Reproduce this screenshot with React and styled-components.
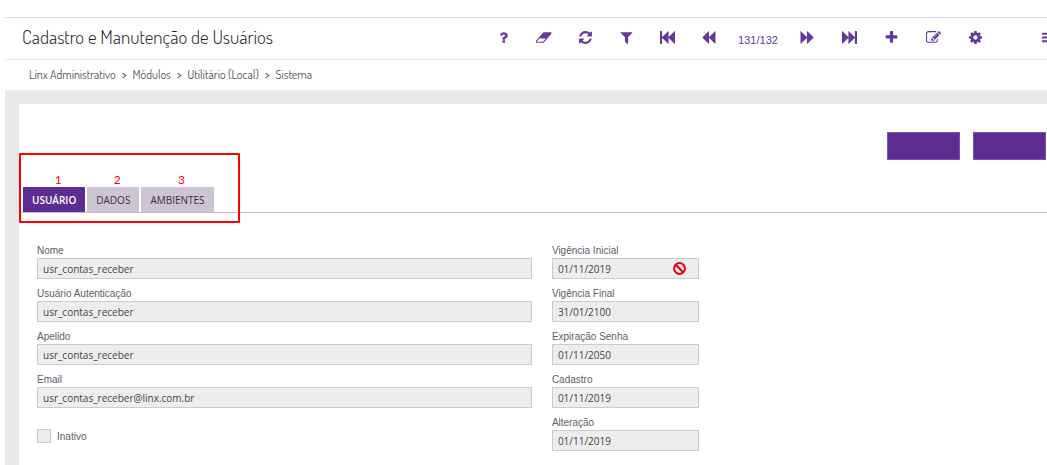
import React, { useState } from "react";
import styled, { createGlobalStyle } from "styled-components";

const GlobalStyle = createGlobalStyle`
  * {
    box-sizing: border-box;
  }
  body {
    margin: 0;
    background: #fff;
    overflow-x: hidden;
    font-family: "Liberation Sans", Arial, sans-serif;
  }
`;

const Page = styled.div`
  display: flex;
  flex-direction: column;
  min-height: 100vh;
  padding: 17px 0 0 5px;
`;

const Header = styled.header`
  display: flex;
  align-items: center;
  justify-content: space-between;
  height: 43px;
  padding-left: 17px;
  border-top: 1px solid #dedede;
  border-bottom: 1px solid #eaeaea;
  overflow: hidden;
`;

const Title = styled.h1`
  margin: 0;
  padding-bottom: 4px;
  color: #222;
  font-family: Dosis, Roboto, sans-serif;
  font-size: 19px;
  font-weight: 300;
  white-space: nowrap;
`;

const Toolbar = styled.nav`
  display: flex;
  align-items: center;
  flex-shrink: 0;
  margin-right: -22px;
`;

const ToolGroup = styled.div`
  display: flex;
  gap: ${(props) => props.$gap || 0}px;
`;

const ToolButton = styled.button`
  display: flex;
  align-items: center;
  justify-content: center;
  width: 41px;
  height: 40px;
  padding: 0 0 2px;
  border: 0;
  background: none;
  color: #65399b;
  cursor: pointer;
`;

const MenuButton = styled(ToolButton)`
  margin-left: 32px;
`;

const Glyph = styled.svg`
  height: 15px;
  fill: currentColor;
`;

const Counter = styled.span`
  width: 58px;
  padding-top: 2px;
  color: #65399b;
  font-size: 11px;
  text-align: center;
`;

const Breadcrumb = styled.nav`
  display: flex;
  align-items: center;
  gap: 6px;
  height: 30px;
  padding: 0 0 2px 24px;
  font-family: Dosis, Roboto, sans-serif;
  font-size: 12px;
  color: #333;
`;

const Crumb = styled.a`
  color: #555;
  text-decoration: none;
`;

const Main = styled.main`
  display: flex;
  flex: 1;
  padding: 14px 0 0 14px;
  background: #e9e9e9;
`;

const Sheet = styled.section`
  flex: 1;
  padding-top: 28px;
  background: #fff;
`;

const Actions = styled.div`
  display: flex;
  justify-content: flex-end;
  gap: 13px;
  padding-right: 1px;
`;

const ActionButton = styled.button`
  width: 73px;
  height: 28px;
  border: 1px solid #7a52a8;
  background: #5c2d91;
  cursor: pointer;
`;

const TabArea = styled.div`
  position: relative;
  padding: 27px 0 0 4px;
  border-bottom: 1px solid #cbbbe0;
`;

const TabList = styled.div`
  display: flex;
  gap: 2px;
`;

const Tab = styled.button`
  position: relative;
  height: 25px;
  padding: 0 9px;
  border: 0;
  background: ${(props) => (props.$active ? "#5c2d91" : "#cdc5d3")};
  color: ${(props) => (props.$active ? "#fff" : "#333")};
  font-family: "Open Sans", sans-serif;
  font-size: 10px;
  font-weight: ${(props) => (props.$active ? 600 : 400)};
  cursor: pointer;
`;

// Number that sits above each tab
const Step = styled.span`
  position: absolute;
  right: 0;
  bottom: 100%;
  left: 8px;
  color: #f00;
  font-family: Lato, sans-serif;
  font-size: 12px;
  font-weight: 400;
  line-height: 15px;
  text-align: center;
`;

const Highlight = styled.div`
  position: absolute;
  top: -7px;
  bottom: -11px;
  left: 0;
  width: 221px;
  border: 2px solid #f00;
  border-radius: 1px;
  pointer-events: none;
`;

const Form = styled.form`
  display: grid;
  grid-template-columns: 49% 147px;
  gap: 20px;
  padding: 29px 0 12px 18px;
`;

const Column = styled.div`
  display: flex;
  flex-direction: column;
  gap: 6px;
`;

const Label = styled.label`
  display: block;
  padding-top: 2px;
  color: #5b6068;
  font-size: 10px;
  line-height: 14px;
`;

const InputWrap = styled.div`
  position: relative;
  display: flex;
`;

const Input = styled.input`
  width: 100%;
  height: 21px;
  padding: 0 5px;
  border: 1px solid #ccc;
  border-radius: 0;
  background: #ededed;
  color: #444;
  font-family: "Open Sans", sans-serif;
  font-size: 10px;
`;

const BanIcon = styled.svg`
  position: absolute;
  top: 4px;
  right: 13px;
  width: 13px;
  height: 13px;
  fill: none;
  stroke: #e60012;
  stroke-width: 2;
`;

const CheckRow = styled.div`
  display: flex;
  align-items: center;
  gap: 6px;
  padding-top: 14px;
`;

const Checkbox = styled.input`
  appearance: none;
  width: 14px;
  height: 14px;
  margin: 0;
  border: 1px solid #ccc;
  background: #ededed;
`;

const icons = {
  help: "M1088 1256v240q0 16-12 28t-28 12h-240q-16 0-28-12t-12-28v-240q0-16 12-28t28-12h240q16 0 28 12t12 28zm316-600q0 54-15.5 101t-35 76.5-55 59.5-57.5 43.5-61 35.5q-41 23-68.5 65t-27.5 67q0 17-12 32.5t-28 15.5h-240q-15 0-25.5-18.5t-10.5-37.5v-45q0-83 65-156.5t143-108.5q59-27 84-56t25-76q0-42-46.5-74t-107.5-32q-65 0-108 29-35 25-107 115-13 16-31 16-12 0-25-8l-164-125q-13-10-15.5-25t5.5-28q160-266 464-266 80 0 161 31t146 83 106 127.5 41 158.5z",
  eraser: "M832 1408l336-384h-768l-336 384h768zm1013-1077q15 34 9.5 71.5t-30.5 65.5l-896 1024q-38 44-96 44h-768q-38 0-69.5-20.5t-47.5-54.5q-15-34-9.5-71.5t30.5-65.5l896-1024q38-44 96-44h768q38 0 69.5 20.5t47.5 54.5z",
  refresh: "M1639 1056q0 5-1 7-64 268-268 434.5t-478 166.5q-146 0-282.5-55t-243.5-157l-129 129q-19 19-45 19t-45-19-19-45v-448q0-26 19-45t45-19h448q26 0 45 19t19 45-19 45l-137 137q71 66 161 102t187 36q134 0 250-65t186-179q11-17 53-117 8-23 30-23h192q13 0 22.5 9.5t9.5 22.5zm25-800v448q0 26-19 45t-45 19h-448q-26 0-45-19t-19-45 19-45l138-138q-148-137-349-137-134 0-250 65t-186 179q-11 17-53 117-8 23-30 23h-199q-13 0-22.5-9.5t-9.5-22.5v-7q65-268 270-434.5t480-166.5q146 0 284 55.5t245 156.5l130-129q19-19 45-19t45 19 19 45z",
  filter: "M1595 295q17 41-14 70l-493 493v742q0 42-39 59-13 5-25 5-27 0-45-19l-256-256q-19-19-19-45v-486l-493-493q-31-29-14-70 17-39 59-39h1280q42 0 59 39z",
  first: "M1747 141q19-19 32-13t13 32v1472q0 26-13 32t-32-13l-710-710q-9-9-13-19v710q0 26-13 32t-32-13l-710-710q-9-9-13-19v678q0 26-19 45t-45 19h-128q-26 0-45-19t-19-45v-1408q0-26 19-45t45-19h128q26 0 45 19t19 45v678q4-11 13-19l710-710q19-19 32-13t13 32v710q4-11 13-19z",
  previous: "M1683 141q19-19 32-13t13 32v1472q0 26-13 32t-32-13l-710-710q-9-9-13-19v710q0 26-13 32t-32-13l-710-710q-19-19-19-45t19-45l710-710q19-19 32-13t13 32v710q4-11 13-19z",
  plus: "M1600 736v192q0 40-28 68t-68 28h-416v416q0 40-28 68t-68 28h-192q-40 0-68-28t-28-68v-416h-416q-40 0-68-28t-28-68v-192q0-40 28-68t68-28h416v-416q0-40 28-68t68-28h192q40 0 68 28t28 68v416h416q40 0 68 28t28 68z",
  edit: "M888 1184l116-116-152-152-116 116v56h96v96h56zm440-720q-16-16-33 1l-350 350q-17 17-1 33t33-1l350-350q17-17 1-33zm80 594v190q0 119-84.5 203.5t-203.5 84.5h-832q-119 0-203.5-84.5t-84.5-203.5v-832q0-119 84.5-203.5t203.5-84.5h832q63 0 117 25 15 7 18 23 3 17-9 29l-49 49q-14 14-32 8-23-6-45-6h-832q-66 0-113 47t-47 113v832q0 66 47 113t113 47h832q66 0 113-47t47-113v-126q0-13 9-22l64-64q15-15 35-7t20 29zm-96-738l288 288-672 672h-288v-288zm444 132l-92 92-288-288 92-92q28-28 68-28t68 28l152 152q28 28 28 68t-28 68z",
  cog: "M1152 896q0-106-75-181t-181-75-181 75-75 181 75 181 181 75 181-75 75-181zm512-109v222q0 12-8 23t-20 13l-185 28q-19 54-39 91 35 50 107 138 10 12 10 25t-9 23q-27 37-99 108t-94 71q-12 0-26-9l-138-108q-44 23-91 38-16 136-29 186-7 28-36 28h-222q-14 0-24.5-8.5t-11.5-21.5l-28-184q-49-16-90-37l-141 107q-10 9-25 9-14 0-25-11-126-114-165-168-7-10-7-23 0-12 8-23 15-21 51-66.5t54-70.5q-27-50-41-99l-183-27q-13-2-21-12.5t-8-23.5v-222q0-12 8-23t19-13l186-28q14-46 39-92-40-57-107-138-10-12-10-24 0-10 9-23 26-36 98.5-107.5t94.5-71.5q13 0 26 10l138 107q44-23 91-38 16-136 29-186 7-28 36-28h222q14 0 24.5 8.5t11.5 21.5l28 184q49 16 90 37l142-107q9-9 24-9 13 0 25 10 129 119 165 170 7 8 7 22 0 12-8 23-15 21-51 66.5t-54 70.5q26 50 41 98l183 28q13 2 21 12.5t8 23.5z",
  menu: "M128 320h1536v256h-1536zM128 768h1536v256h-1536zM128 1216h1536v256h-1536z",
};

const Icon = ({ name, width = 1792, flip }) => (
  <Glyph viewBox={`0 0 ${width} 1792`} aria-hidden="true">
    <path
      d={icons[name]}
      transform={flip ? `translate(${width} 0) scale(-1 1)` : undefined}
    />
  </Glyph>
);

const editTools = [
  { label: "Ajuda", name: "help" },
  { label: "Limpar", name: "eraser", width: 1920 },
  { label: "Atualizar", name: "refresh" },
  { label: "Filtrar", name: "filter" },
  { label: "Primeiro", name: "first" },
  { label: "Anterior", name: "previous" },
];

const recordTools = [
  { label: "Próximo", name: "previous", flip: true },
  { label: "Último", name: "first", flip: true },
  { label: "Incluir", name: "plus" },
  { label: "Editar", name: "edit" },
  { label: "Configurar", name: "cog" },
];

const crumbs = ["Linx Administrativo", "Módulos", "Utilitário (Local)", "Sistema"];
const tabs = ["USUÁRIO", "DADOS", "AMBIENTES"];

const userFields = [
  { id: "nome", label: "Nome", value: "usr_contas_receber" },
  { id: "autenticacao", label: "Usuário Autenticação", value: "usr_contas_receber" },
  { id: "apelido", label: "Apelido", value: "usr_contas_receber" },
  { id: "email", label: "Email", value: "usr_contas_receber@linx.com.br" },
];

const dateFields = [
  { id: "inicial", label: "Vigência Inicial", value: "01/11/2019", blocked: true },
  { id: "final", label: "Vigência Final", value: "31/01/2100" },
  { id: "expiracao", label: "Expiração Senha", value: "01/11/2050" },
  { id: "cadastro", label: "Cadastro", value: "01/11/2019" },
  { id: "alteracao", label: "Alteração", value: "01/11/2019" },
];

const Field = ({ id, label, value, blocked }) => (
  <div>
    <Label htmlFor={id}>{label}</Label>
    <InputWrap>
      <Input id={id} type="text" defaultValue={value} readOnly />
      {blocked && (
        <BanIcon viewBox="0 0 13 13" aria-hidden="true">
          <circle cx="6.5" cy="6.5" r="5.4" />
          <path d="M2.8 2.8l7.4 7.4" />
        </BanIcon>
      )}
    </InputWrap>
  </div>
);

const Tools = ({ items }) =>
  items.map(({ label, ...icon }) => (
    <ToolButton key={label} type="button" aria-label={label}>
      <Icon {...icon} />
    </ToolButton>
  ));

export default function App() {
  const [active, setActive] = useState(0);

  return (
    <>
      <GlobalStyle />
      <Page>
        <Header>
          <Title>Cadastro e Manutenção de Usuários</Title>
          <Toolbar>
            <ToolGroup>
              <Tools items={editTools} />
            </ToolGroup>
            <Counter>131/132</Counter>
            <ToolGroup $gap={1}>
              <Tools items={recordTools} />
            </ToolGroup>
            <MenuButton type="button" aria-label="Menu">
              <Icon name="menu" />
            </MenuButton>
          </Toolbar>
        </Header>
        <Breadcrumb>
          {crumbs.map((crumb, i) => (
            <React.Fragment key={crumb}>
              {i > 0 && <span>&gt;</span>}
              <Crumb href="#">{crumb}</Crumb>
            </React.Fragment>
          ))}
        </Breadcrumb>
        <Main>
          <Sheet>
            <Actions>
              <ActionButton type="button" aria-label="Ação 1" />
              <ActionButton type="button" aria-label="Ação 2" />
            </Actions>
            <TabArea>
              <TabList role="tablist">
                {tabs.map((tab, i) => (
                  <Tab
                    key={tab}
                    type="button"
                    role="tab"
                    aria-selected={active === i}
                    $active={active === i}
                    onClick={() => setActive(i)}
                  >
                    <Step>{i + 1}</Step>
                    {tab}
                  </Tab>
                ))}
              </TabList>
              <Highlight />
            </TabArea>
            <Form>
              <Column>
                {userFields.map((field) => (
                  <Field key={field.id} {...field} />
                ))}
                <CheckRow>
                  <Checkbox id="inativo" type="checkbox" />
                  <Label htmlFor="inativo">Inativo</Label>
                </CheckRow>
              </Column>
              <Column>
                {dateFields.map((field) => (
                  <Field key={field.id} {...field} />
                ))}
              </Column>
            </Form>
          </Sheet>
        </Main>
      </Page>
    </>
  );
}
